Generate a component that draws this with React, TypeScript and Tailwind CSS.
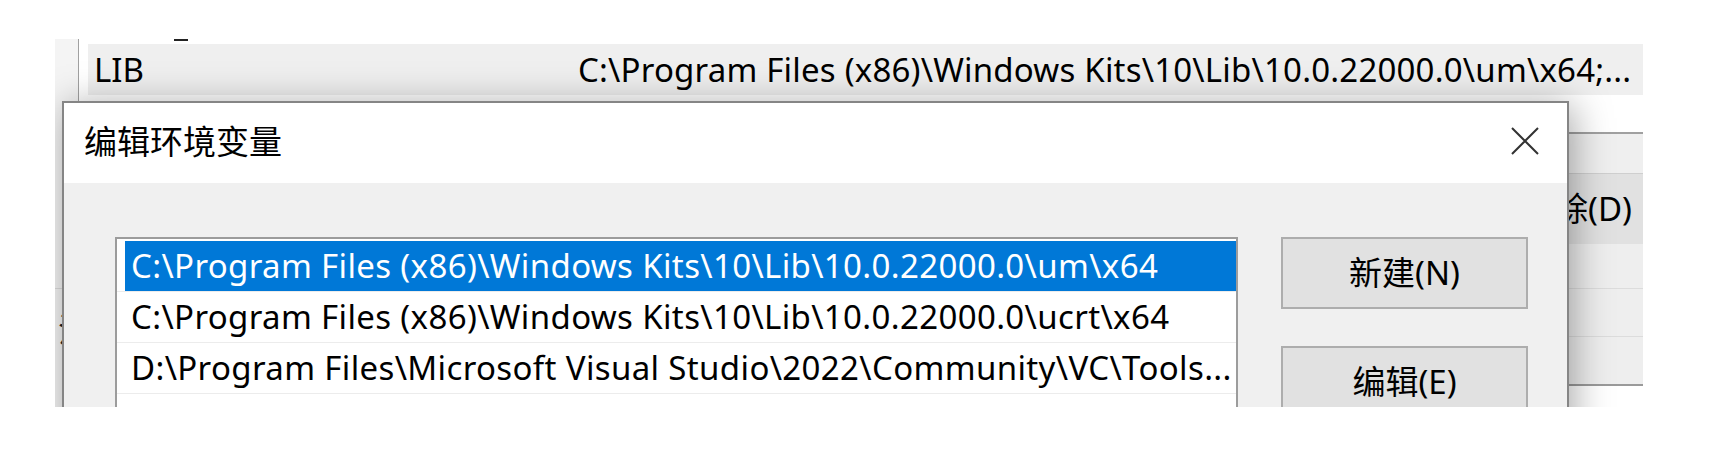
import React from 'react';

const font = "font-['Noto_Sans','Noto_Sans_CJK_SC',sans-serif]";

const paths = [
  'C:\\Program Files (x86)\\Windows Kits\\10\\Lib\\10.0.22000.0\\um\\x64',
  'C:\\Program Files (x86)\\Windows Kits\\10\\Lib\\10.0.22000.0\\ucrt\\x64',
  'D:\\Program Files\\Microsoft Visual Studio\\2022\\Community\\VC\\Tools...',
];

const CloseIcon = () => (
  <svg width="28" height="28" viewBox="0 0 28 28" fill="none">
    <path d="M1 1L27 27M27 1L1 27" stroke="#333" strokeWidth="2" />
  </svg>
);

const DialogButton = ({ label }: { label: string }) => (
  <button className="w-[247px] h-[72px] border-2 border-[#adadad] bg-[#e1e1e1] text-[33px] text-black flex items-center justify-center">
    {label}
  </button>
);

const EditEnvDialog = () => (
  <div className="absolute left-[7px] top-[62px] w-[1507px] h-[400px] border-2 border-[#858585] bg-[#f0f0f0] shadow-[4px_4px_36px_rgba(0,0,0,0.35)]">
    {/* title bar */}
    <div className="h-[80px] bg-white flex items-center justify-between pl-[20px] pr-[28px]">
      <span className="text-[33px] text-black leading-none -mt-[4px]">编辑环境变量</span>
      <span className="-mt-[4px]"><CloseIcon /></span>
    </div>

    {/* body */}
    <div className="flex gap-[43px] pt-[54px] pl-[51px]">
      <div className="w-[1123px] h-[300px] border-2 border-[#9c9c9c] bg-white pt-[2px]">
        {paths.map((p, i) => (
          <div key={p} className="h-[51px] border-b border-[#ececec] pl-[8px]">
            <div
              className={`h-[50px] flex items-center pl-[6px] text-[33px] tracking-[0.36px] whitespace-nowrap overflow-hidden ${i === 0 ? 'bg-[#0078d7] text-white' : 'text-black'}`}
            >
              {p}
            </div>
          </div>
        ))}
      </div>
      <div className="flex flex-col gap-[37px]">
        <DialogButton label="新建(N)" />
        <DialogButton label="编辑(E)" />
      </div>
    </div>
  </div>
);

export default function App() {
  return (
    <div className={`w-[1710px] h-[454px] bg-white pl-[55px] pt-[39px] ${font}`}>
      <div className="relative w-[1588px] h-[368px] overflow-hidden bg-white">
        {/* background window: variable list */}
        <div className="flex h-[62px]">
          <div className="w-[24px] bg-[#f4f4f4] border-r border-[#a0a0a0]" />
          <div className="flex-1 bg-white pl-[9px]">
            <div className="h-[5px] pl-[86px]">
              <div className="w-[14px] h-[2px] bg-[#222]" />
            </div>
            <div className="h-[51px] bg-[#efefef] flex items-center text-[33px] text-black whitespace-nowrap">
              <span className="pl-[6px] w-[490px]">LIB</span>
              <span className="tracking-[0.2px]">C:\Program Files (x86)\Windows Kits\10\Lib\10.0.22000.0\um\x64;...</span>
            </div>
          </div>
        </div>

        {/* background window: lower part */}
        <div className="flex h-[306px]">
          <div className="w-[24px] bg-[#f4f4f4] border-r border-[#a0a0a0] overflow-hidden">
            <div className="h-[188px] border-b border-[#dcdcdc]" />
            <div className="pl-[3px] pt-[24px] text-[33px] leading-none text-[#222]">注</div>
          </div>
          <div className="flex-1" />
          <div className="w-[75px] flex flex-col">
            <div className="h-[31px] bg-white" />
            <div className="h-[41px] bg-[#efefef] border-t-2 border-[#a0a0a0]" />
            <div className="h-[71px] bg-[#e1e1e1] border-t border-[#cfcfcf] flex items-center justify-end pr-[11px] text-[33px] text-black whitespace-nowrap overflow-hidden">
              删除(D)
            </div>
            <div className="h-[45px] bg-[#eeeeee] border-b border-[#dcdcdc]" />
            <div className="h-[48px] bg-[#eeeeee] border-b border-[#dcdcdc]" />
            <div className="h-[49px] bg-[#eeeeee] border-b-2 border-[#9a9a9a]" />
            <div className="flex-1 bg-white" />
          </div>
        </div>

        <EditEnvDialog />
      </div>
    </div>
  );
}
